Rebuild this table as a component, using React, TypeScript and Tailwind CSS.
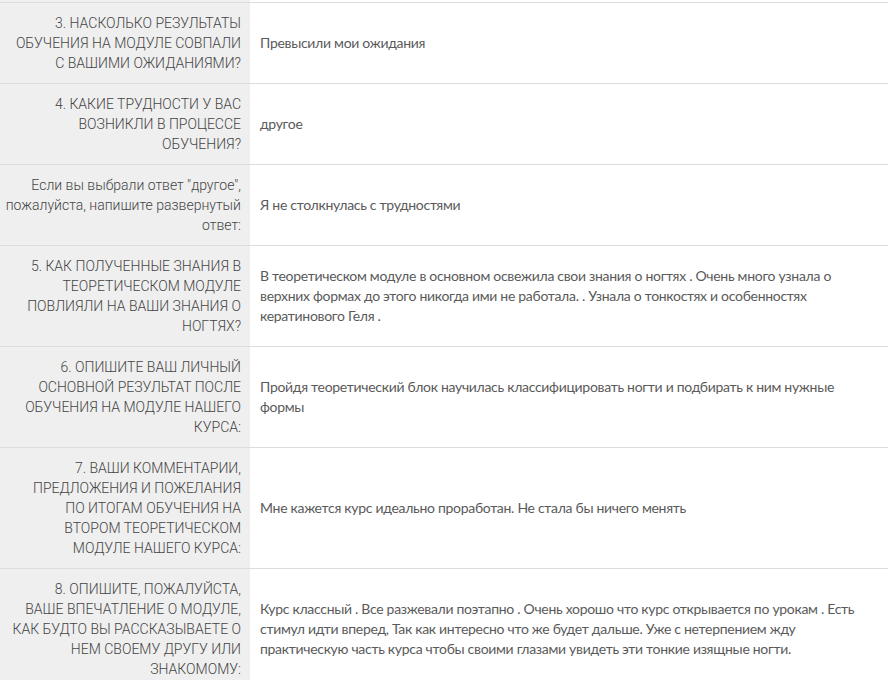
const rows: { q: string[]; a: string }[] = [
  {
    q: ['3. НАСКОЛЬКО РЕЗУЛЬТАТЫ', 'ОБУЧЕНИЯ НА МОДУЛЕ СОВПАЛИ', 'С ВАШИМИ ОЖИДАНИЯМИ?'],
    a: 'Превысили мои ожидания',
  },
  {
    q: ['4. КАКИЕ ТРУДНОСТИ У ВАС', 'ВОЗНИКЛИ В ПРОЦЕССЕ', 'ОБУЧЕНИЯ?'],
    a: 'другое',
  },
  {
    q: ['Если вы выбрали ответ "другое",', 'пожалуйста, напишите развернутый', 'ответ:'],
    a: 'Я не столкнулась с трудностями',
  },
  {
    q: ['5. КАК ПОЛУЧЕННЫЕ ЗНАНИЯ В', 'ТЕОРЕТИЧЕСКОМ МОДУЛЕ', 'ПОВЛИЯЛИ НА ВАШИ ЗНАНИЯ О', 'НОГТЯХ?'],
    a: 'В теоретическом модуле в основном освежила свои знания о ногтях . Очень много узнала о верхних формах до этого никогда ими не работала. . Узнала о тонкостях и особенностях кератинового Геля .',
  },
  {
    q: ['6. ОПИШИТЕ ВАШ ЛИЧНЫЙ', 'ОСНОВНОЙ РЕЗУЛЬТАТ ПОСЛЕ', 'ОБУЧЕНИЯ НА МОДУЛЕ НАШЕГО', 'КУРСА:'],
    a: 'Пройдя теоретический блок научилась классифицировать ногти и подбирать к ним нужные формы',
  },
  {
    q: [
      '7. ВАШИ КОММЕНТАРИИ,',
      'ПРЕДЛОЖЕНИЯ И ПОЖЕЛАНИЯ',
      'ПО ИТОГАМ ОБУЧЕНИЯ НА',
      'ВТОРОМ ТЕОРЕТИЧЕСКОМ',
      'МОДУЛЕ НАШЕГО КУРСА:',
    ],
    a: 'Мне кажется курс идеально проработан. Не стала бы ничего менять',
  },
  {
    q: [
      '8. ОПИШИТЕ, ПОЖАЛУЙСТА,',
      'ВАШЕ ВПЕЧАТЛЕНИЕ О МОДУЛЕ,',
      'КАК БУДТО ВЫ РАССКАЗЫВАЕТЕ О',
      'НЕМ СВОЕМУ ДРУГУ ИЛИ',
      'ЗНАКОМОМУ:',
    ],
    a: 'Курс классный . Все разжевали поэтапно . Очень хорошо что курс открывается по урокам . Есть стимул идти вперед, Так как интересно что же будет дальше. Уже с нетерпением жду практическую часть курса чтобы своими глазами увидеть эти тонкие изящные ногти.',
  },
]

export default function App() {
  return (
    <div className="h-[680px] w-[888px] overflow-hidden bg-white font-['Lato',sans-serif] text-[14px] leading-5 text-[#5a5a5a]">
      {/* tail of the previous row */}
      <div className="flex h-[2px]">
        <div className="w-[250px] shrink-0 bg-[#efefef]" />
        <div className="flex-1" />
      </div>
      {rows.map((r, i) => (
        <div key={i} className="flex border-t border-[#dcdcdc]">
          <div className="flex w-[250px] shrink-0 flex-col items-end bg-[#efefef] py-[10px] pl-[8px] pr-[9px] text-right font-['Roboto',sans-serif] font-light text-[#444]">
            {r.q.map((line, j) => (
              <span key={j} className="whitespace-nowrap">
                {line}
              </span>
            ))}
          </div>
          <div className="flex flex-1 items-center py-[10px] pl-[10px] pr-[8px] tracking-[-0.3px]">
            <p>{r.a}</p>
          </div>
        </div>
      ))}
    </div>
  )
}
